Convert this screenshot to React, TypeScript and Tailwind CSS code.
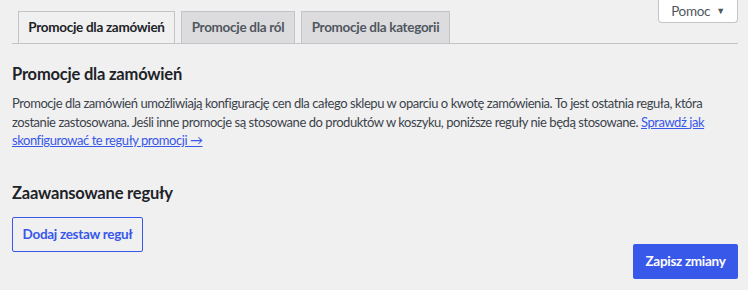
const font = { fontFamily: "Lato, 'Noto Sans', sans-serif" };

function Tab({ label, active, w }: { label: string; active?: boolean; w: string }) {
  return (
    <div
      className={`${w} h-[32px] flex items-center justify-center border border-b-0 border-[#c3c4c7] text-[13.5px] font-bold tracking-[-0.3px] ${
        active ? "bg-[#f0f0f1] text-[#1d2327]" : "bg-[#dcdcde] text-[#50575e]"
      }`}
    >
      {label}
    </div>
  );
}

export default function App() {
  return (
    <div style={font} className="h-[290px] bg-[#f0f0f1] pl-[12px] pr-[10px] text-[#3c434a]">
      {/* Tabs + help */}
      <div className="flex items-start justify-between border-b border-[#c3c4c7] h-[44px]">
        <div className="flex gap-[6px] ml-[6px] mt-[11px]">
          <Tab label="Promocje dla zamówień" active w="w-[157px]" />
          <Tab label="Promocje dla ról" w="w-[114px]" />
          <Tab label="Promocje dla kategorii" w="w-[149px]" />
        </div>
        <button className="w-[80px] h-[23px] bg-white border border-t-0 border-[#c3c4c7] rounded-b-[4px] flex items-center justify-center gap-[6px] text-[13.5px] text-[#50575e] tracking-[-0.3px]">
          Pomoc
          <span className="text-[9px] text-[#50575e]">▼</span>
        </button>
      </div>

      <h2 className="mt-[19px] text-[16.5px] leading-[22px] font-bold text-[#1d2327] tracking-[-0.2px]">
        Promocje dla zamówień
      </h2>
      <p className="mt-[9px] text-[13px] leading-[18.5px] tracking-[-0.45px] pr-[20px]">
        Promocje dla zamówień umożliwiają konfigurację cen dla całego sklepu w oparciu o kwotę zamówienia. To jest
        ostatnia reguła, która zostanie zastosowana. Jeśli inne promocje są stosowane do produktów w koszyku, poniższe
        reguły nie będą stosowane.{" "}
        <a href="#" className="text-[#3858e9] underline">
          Sprawdź jak skonfigurować te reguły promocji →
        </a>
      </p>

      <h2 className="mt-[32px] text-[16.5px] leading-[22px] font-bold text-[#1d2327] tracking-[-0.2px]">
        Zaawansowane reguły
      </h2>

      <div className="flex items-start justify-between mt-[13px]">
        <button className="w-[131px] h-[35px] border border-[#3858e9] rounded-[2px] text-[13.5px] font-bold text-[#3858e9] tracking-[-0.3px]">
          Dodaj zestaw reguł
        </button>
        <button className="mt-[27px] w-[105px] h-[35px] bg-[#3858e9] rounded-[2px] text-[13.5px] font-bold text-white tracking-[-0.3px]">
          Zapisz zmiany
        </button>
      </div>
    </div>
  );
}
